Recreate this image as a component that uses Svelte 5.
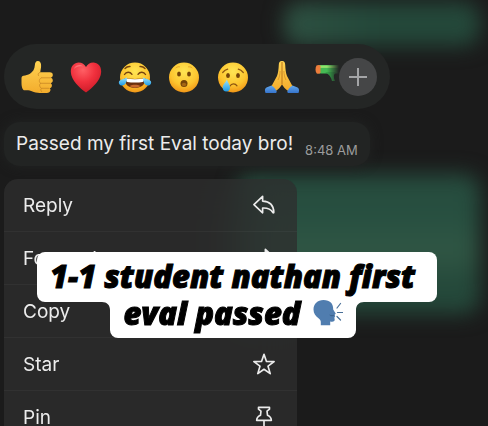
<script lang="ts">
  type ReactionId = 'thumb' | 'heart' | 'joy' | 'wow' | 'sad' | 'pray' | 'pistol'
  type ActionId = 'reply' | 'forward' | 'copy' | 'star' | 'pin'

  const reactions: { id: ReactionId; label: string }[] = [
    { id: 'thumb', label: 'Thumbs up' },
    { id: 'heart', label: 'Heart' },
    { id: 'joy', label: 'Tears of joy' },
    { id: 'wow', label: 'Surprised' },
    { id: 'sad', label: 'Crying' },
    { id: 'pray', label: 'Folded hands' },
    { id: 'pistol', label: 'Water pistol' }
  ]

  const actions: { id: ActionId; label: string }[] = [
    { id: 'reply', label: 'Reply' },
    { id: 'forward', label: 'Forward' },
    { id: 'copy', label: 'Copy' },
    { id: 'star', label: 'Star' },
    { id: 'pin', label: 'Pin' }
  ]
</script>

{#snippet emoji(id: ReactionId)}
  <svg class="emoji" viewBox="0 0 32 32" aria-hidden="true">
    {#if id === 'thumb'}
      <defs>
        <linearGradient id="skin" x1="0" y1="0" x2="0" y2="1">
          <stop offset="0" stop-color="#ffd353" />
          <stop offset="1" stop-color="#f3ac2c" />
        </linearGradient>
        <radialGradient id="face" cx=".5" cy=".3" r=".75">
          <stop offset="0" stop-color="#ffe554" />
          <stop offset=".6" stop-color="#fdc52f" />
          <stop offset="1" stop-color="#ee8d13" />
        </radialGradient>
        <radialGradient id="red" cx=".4" cy=".25" r=".8">
          <stop offset="0" stop-color="#ff6065" />
          <stop offset=".5" stop-color="#f0303d" />
          <stop offset="1" stop-color="#c91a27" />
        </radialGradient>
        <linearGradient id="tear" x1="0" y1="0" x2="0" y2="1">
          <stop offset="0" stop-color="#9be2fb" />
          <stop offset="1" stop-color="#1e9be6" />
        </linearGradient>
        <linearGradient id="sleeve" x1="0" y1="0" x2="0" y2="1">
          <stop offset="0" stop-color="#62a8ee" />
          <stop offset="1" stop-color="#3674cb" />
        </linearGradient>
      </defs>
      <path
        fill="url(#skin)"
        d="M.5 17c0-1.200.8-2 2-2.200 2.200-.5 4.500-.8 6.500-2 3-2 4.600-4.600 4.800-8.200C14 1.500 15 0 16.700 0c2.500 0 3.600 2 3.400 5-.1 2.300-.6 4-.9 6.300h9.600c2 0 3 1.100 3 2.700 0 1.400-.8 2.300-1.900 2.700 1.300.5 1.900 1.500 1.900 2.800 0 1.500-.9 2.400-2.200 2.700 1 .6 1.400 1.500 1.300 2.500-.2 1.400-1 2.200-2.300 2.400.8.6 1 1.400.8 2.300-.4 1.700-1.500 2.400-3.600 2.500-4.700.4-9.500.3-13-.8-1.800-.6-3.500-1.800-5.600-1.800H3.600C1.600 29.300.5 26 .5 22z"
      />
      <path
        fill="none"
        stroke="#c98825"
        stroke-width=".8"
        stroke-linecap="round"
        d="M19.200 11.300c-2 .6-2.400 1.800-1.800 3.200m3 2.300h9m-9.800 5.500h9.300m-8.300 5h7.200M20 17c-2 1-2.400 4-.4 5.300-1.700 1.300-1.100 4 .8 5-1 1-.7 2.500.3 3.400"
      />
    {:else if id === 'heart'}
      <path
        fill="url(#red)"
        d="M16 31.500C10 27 1 19.500.8 10.700.7 5 4.200 1.500 8.700 1.500c3.300 0 5.900 1.700 7.300 4.600 1.400-2.900 4-4.600 7.300-4.600 4.500 0 8 3.500 7.900 9.200C31 19.500 22 27 16 31.500z"
      />
      <path fill="#ff9695" opacity=".55" d="M4 8c1-4 6-5.300 9-2.500C9.500 4.800 6.500 5.500 4 8z" />
    {:else if id === 'joy'}
      <circle cx="16" cy="16.500" r="15" fill="url(#face)" />
      <path
        fill="none"
        stroke="#77430e"
        stroke-width="1.400"
        stroke-linecap="round"
        d="M5.500 13.500c1.700-3 5.500-3 7.500-.2m6 0c2-2.800 5.800-2.800 7.500.2M6 7.500c1.500-1.600 3.200-2.200 5-2m10 0c1.800-.2 3.500.4 5 2"
      />
      <path fill="#6b300d" d="M5.700 17c5.700 1.200 14.900 1.200 20.600 0 .5 6.500-4 10-10.300 10S5.200 23.500 5.700 17z" />
      <path fill="#fff" d="M6.600 17.600c5.700 1 13.100 1 18.800 0-.2 2-.8 3-1.800 3.300-4.200.8-11 .8-15.200 0-1-.3-1.600-1.300-1.800-3.300z" />
      <path fill="#c8692c" d="M10.500 25c3-1.800 8-1.800 11 0-3.200 2.200-7.800 2.200-11 0z" />
      <path
        fill="url(#tear)"
        d="M7.800 16.500c.5 4.500-1.800 8-5 8-2.400 0-3.700-2.600-2.500-4.500 1.300-1.800 4.800-1.800 7.500-3.500zm16.400 0c-.5 4.500 1.800 8 5 8 2.400 0 3.700-2.600 2.500-4.500-1.300-1.800-4.800-1.800-7.500-3.500z"
      />
    {:else if id === 'wow'}
      <circle cx="16" cy="16.500" r="15" fill="url(#face)" />
      <g fill="#754408">
        <ellipse cx="11" cy="13" rx="1.900" ry="2.600" />
        <ellipse cx="21" cy="13" rx="1.900" ry="2.600" />
        <ellipse cx="16" cy="22.500" rx="3.500" ry="3.500" />
      </g>
      <ellipse cx="16" cy="23.500" rx="2.200" ry="1.700" fill="#a56615" />
      <path
        fill="none"
        stroke="#dc9722"
        stroke-width=".8"
        stroke-linecap="round"
        d="M8 6.800c1-.9 2.200-1.200 3.500-1m9 0c1.300-.2 2.500.1 3.500 1"
      />
    {:else if id === 'sad'}
      <circle cx="16" cy="16.500" r="15" fill="url(#face)" />
      <g fill="#754408">
        <ellipse cx="11" cy="14.500" rx="1.900" ry="2.600" />
        <ellipse cx="21" cy="14.500" rx="1.900" ry="2.600" />
      </g>
      <path
        fill="none"
        stroke="#8d5510"
        stroke-width="1.200"
        stroke-linecap="round"
        d="M13 25c1.500-2.800 5.300-2.800 7-.2M5.700 11.500c1.300-1.500 3-2.800 5-3.300m10.600 0c2 .5 3.700 1.800 5 3.300"
      />
      <path fill="url(#tear)" d="M9.800 18.500c1 3 3.200 5.200 3.200 8 0 2.500-1.500 4-3.700 4s-3.600-1.600-3.600-4c0-3 2.900-4.800 4.100-8z" />
    {:else if id === 'pray'}
      <path
        fill="url(#skin)"
        d="M15.700 0c-2 0-2.800 1.600-2.900 3.700-.2 4.800-.7 8.300-1.800 11.300L5.300 25.500l4.500 4.500c3-2 4.600-3.800 6.200-6.500 1.600 2.700 3.200 4.500 6.200 6.500l4.500-4.500L21 15c-1.100-3-1.600-6.500-1.800-11.300C19.100 1.600 18.300 0 16.300 0z"
      />
      <path fill="none" stroke="#b8741b" stroke-width="1" d="M16 1v22.500" />
      <path
        fill="none"
        stroke="#d38f24"
        stroke-width=".8"
        d="M12 19c1.300-2.400 2-5.500 2.100-9M20 19c-1.300-2.400-2-5.500-2.100-9"
      />
      <path
        fill="url(#sleeve)"
        d="M5.500 24.500c2.500 1.500 4.500 3.700 5.300 6.200-.2.900-.8 1.300-1.800 1.300H-.5c-1.200-3-.5-5 1.500-5.700zm21 0c-2.500 1.500-4.500 3.700-5.300 6.200.2.900.8 1.300 1.800 1.300h9.500c1.200-3 .5-5-1.500-5.700z"
      />
    {:else}
      <path fill="#45ba54" d="M4 4h23c3 0 4 2 4 5l-2 3.500H17c-1 1.500-3 1.300-4 0H4z" />
      <path fill="#92e36b" d="M5 4.500h21v2.400H5z" />
      <path fill="#35a649" d="M10 11h11c-2.500 2-2.800 5-1 9h-3c-.5-3.500-3-7-7-9z" />
      <path fill="#ed7d3b" d="M1.500 4.500c1.500-.9 3.300-.7 4 .3v7c-.7 1.200-2.500 1.400-4 .5-1.300-2-1.300-5.800 0-7.800z" />
    {/if}
  </svg>
{/snippet}

{#snippet icon(id: ActionId)}
  <svg class="icon" class:flipped={id === 'forward'} viewBox="0 0 24 24" aria-hidden="true">
    {#if id === 'reply' || id === 'forward'}
      <path d="M10.500 2.500 1 11.500l9.500 9v-5.200c5.500-.3 8.800 1 11.200 4.900.4.600 1 .4 1-.3C22.500 12.500 18.500 8 10.500 7.700z" />
    {:else if id === 'copy'}
      <path d="M8 7V3h7l5 5v9h-5M4 7h6l5 5v9H4z" />
    {:else if id === 'star'}
      <path d="m12 1.500 2.700 7.700 8.300.2-6.600 5 2.400 8.100-6.800-4.800-6.800 4.800 2.400-8.100L1 9.400l8.300-.2z" />
    {:else}
      <path d="M6 1.500h12v2L15.300 5.700l.5 4.300c2.500 1.100 4.200 3 4.200 5.700H4c0-2.700 1.700-4.600 4.200-5.700l.5-4.300L6 3.500zM12 15.700V24" />
    {/if}
  </svg>
{/snippet}

<main class="chat">
  <div class="blur-bubble top"></div>
  <div class="blur-bubble middle"></div>

  <div class="reactions">
    <div class="reaction-list">
      {#each reactions as reaction (reaction.id)}
        <button class="reaction" type="button" aria-label={reaction.label}>
          {@render emoji(reaction.id)}
        </button>
      {/each}
    </div>
    <button class="more" type="button" aria-label="More reactions">
      <svg viewBox="0 0 38 38" aria-hidden="true"><path d="M19 10v18M10 19h18" /></svg>
    </button>
  </div>

  <div class="message">
    <p>Passed my first Eval today bro!</p>
    <time datetime="08:48">8:48 AM</time>
  </div>

  <div class="menu">
    {#each actions as action (action.id)}
      <button class="menu-item" type="button">
        <span>{action.label}</span>
        {@render icon(action.id)}
      </button>
    {/each}
  </div>

  <div class="caption">
    <div class="caption-line first">1-1 student nathan first</div>
    <div class="caption-line second">
      <svg class="notch left" viewBox="0 0 8 8" aria-hidden="true"><path d="M0 0h8v8C8 3 5 0 0 0z" /></svg>
      <span>eval passed</span>
      <svg class="speaking" viewBox="0 0 30 28" role="img" aria-label="Speaking head">
        <path
          fill="#507daf"
          d="M10.500 1C4.500 1 .5 5 .5 10.500c0 4 2 6.500 5 8.700 1.700 1.300 2.500 2.700 2.300 4.800v2.200h9.400v-3.700c2.500.5 4.300.2 4.500-1.700l-.3-2.300.8-1.200-.6-1.500 1.200-1-2.600-4.400C20.300 4.500 17 1 10.500 1z"
        />
        <path fill="#3d6590" d="M16 15.500c2.500.7 4 .6 5.300.2l-.6 1.400c-1.600.5-3.300.2-4.700-1.600z" />
        <path stroke="#496f98" stroke-width="1.200" stroke-linecap="round" d="m24 9 3.500-4.500M24.500 13.500H30M24 17.500l3.500 3.500" />
      </svg>
      <svg class="notch right" viewBox="0 0 8 8" aria-hidden="true"><path d="M8 0H0v8C0 3 3 0 8 0z" /></svg>
    </div>
  </div>
</main>

<style>
  :global(body) {
    margin: 0;
    background: #1b1b1b;
  }

  .chat {
    position: relative;
    box-sizing: border-box;
    height: 100vh;
    display: flex;
    flex-direction: column;
    align-items: flex-start;
    padding: 44px 4px 0;
    overflow: hidden;
    background: #1b1b1b;
    color: #ececec;
    font-family: Inter, 'Liberation Sans', sans-serif;
  }

  button {
    border: 0;
    padding: 0;
    background: none;
    color: inherit;
    font: inherit;
  }

  .blur-bubble {
    position: absolute;
    right: 8px;
    border-radius: 16px;
    background: linear-gradient(90deg, #2e5142, #24483a 50%);
    filter: blur(10px);
  }

  .blur-bubble.top {
    top: 2px;
    width: 196px;
    height: 44px;
  }

  .blur-bubble.middle {
    top: 174px;
    width: 244px;
    height: 140px;
    background: linear-gradient(180deg, #264b3d, #274f40 30%, #305644 55%, #24483a 80%);
  }

  .reactions {
    position: relative;
    box-sizing: border-box;
    width: 100%;
    max-width: 386px;
    height: 65px;
    flex: none;
    display: flex;
    align-items: center;
    padding: 0 13px 0 17px;
    border-radius: 33px;
    background: #242625;
  }

  .reaction-list {
    flex: 1;
    min-width: 0;
    display: flex;
    gap: 17px;
    overflow: hidden;
    mask-image: linear-gradient(90deg, #000 calc(100% - 12px), transparent);
  }

  .reaction {
    flex: none;
    width: 32px;
    height: 34px;
  }

  .emoji {
    display: block;
    width: 32px;
    height: 34px;
    overflow: visible;
  }

  .more {
    flex: none;
    width: 38px;
    height: 38px;
    border-radius: 50%;
    background: #454647;
  }

  .more svg {
    display: block;
    stroke: #a4a5a7;
    stroke-width: 2;
  }

  .message {
    position: relative;
    box-sizing: border-box;
    height: 44px;
    flex: none;
    display: flex;
    gap: 12px;
    margin: 13px 0;
    padding: 9px 12px;
    border-radius: 16px;
    background: #222423;
    box-shadow: 0 0 12px #222423;
    white-space: nowrap;
  }

  .message p {
    margin: 0;
    font-size: 19px;
    line-height: 26px;
  }

  .message time {
    padding-top: 6px;
    color: #9b9c9c;
    font-size: 13px;
    line-height: 26px;
  }

  .menu {
    position: relative;
    width: 60%;
    min-width: 293px;
    border-radius: 14px;
    background: rgb(46 46 46 / 76%);
    backdrop-filter: blur(20px);
  }

  .menu-item {
    box-sizing: border-box;
    width: 100%;
    height: 53px;
    display: flex;
    align-items: center;
    justify-content: space-between;
    padding: 0 22px 0 19px;
    border-bottom: 1px solid rgb(255 255 255 / 4%);
    font-size: 19px;
    text-align: left;
  }

  .icon {
    width: 22px;
    height: 22px;
    fill: none;
    stroke: #ececec;
    stroke-width: 1.8;
    stroke-linejoin: round;
  }

  .icon.flipped {
    transform: scaleX(-1);
  }

  .caption {
    position: absolute;
    top: 252px;
    left: 37px;
    right: 51px;
    display: flex;
    flex-direction: column;
    align-items: center;
    color: #000;
    font-family: 'Open Sans', Lato, sans-serif;
    font-size: 31px;
    font-style: italic;
    font-weight: 800;
    -webkit-text-stroke: 1px #000;
    white-space: nowrap;
  }

  .caption-line {
    box-sizing: border-box;
    background: #fff;
    border-radius: 8px;
  }

  .caption-line.first {
    width: 100%;
    height: 50px;
    padding: 0 13px;
    line-height: 48px;
  }

  .caption-line.second {
    position: relative;
    height: 36px;
    display: flex;
    align-items: center;
    gap: 12px;
    margin-right: 8px;
    padding: 0 13px 14px;
    border-radius: 0 0 8px 8px;
    line-height: 22px;
  }

  .speaking {
    width: 30px;
    height: 28px;
    fill: none;
  }

  .notch {
    position: absolute;
    top: 0;
    width: 8px;
    height: 8px;
    fill: #fff;
  }

  .notch.left {
    right: 100%;
  }

  .notch.right {
    left: 100%;
  }
</style>
